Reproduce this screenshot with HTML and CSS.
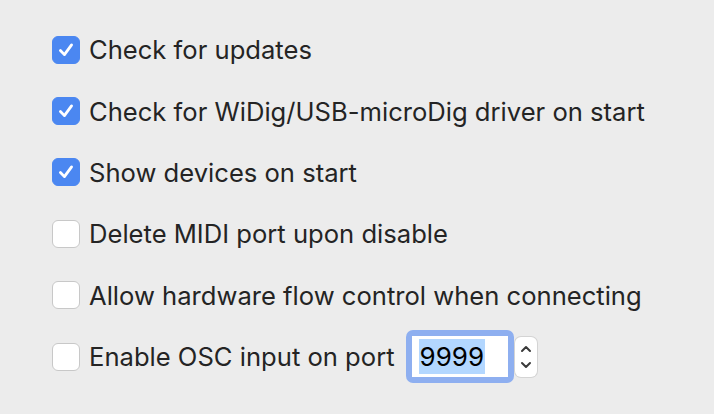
FILE: index.html
```html
<!DOCTYPE html>
<html>
<head>
    <title>Preferences</title>
    <link rel="stylesheet" href="styles.css">
</head>
<body>
    <div class="prefs">
        <label class="row">
            <span class="box checked"><svg viewBox="0 0 28 28"><path d="M8 14.5 L12.3 19 L20 8.5"/></svg></span>
            <span class="text">Check for updates</span>
        </label>
        <label class="row">
            <span class="box checked"><svg viewBox="0 0 28 28"><path d="M8 14.5 L12.3 19 L20 8.5"/></svg></span>
            <span class="text">Check for WiDig/USB-microDig driver on start</span>
        </label>
        <label class="row">
            <span class="box checked"><svg viewBox="0 0 28 28"><path d="M8 14.5 L12.3 19 L20 8.5"/></svg></span>
            <span class="text">Show devices on start</span>
        </label>
        <label class="row">
            <span class="box"></span>
            <span class="text">Delete MIDI port upon disable</span>
        </label>
        <label class="row">
            <span class="box"></span>
            <span class="text">Allow hardware flow control when connecting</span>
        </label>
        <div class="row">
            <span class="box"></span>
            <span class="text">Enable OSC input on port</span>
            <div class="port">
                <div class="field"><span class="sel">9999</span></div>
            </div>
            <div class="stepper">
                <svg viewBox="0 0 22 40"><path d="M7 14 L11 10 L15 14"/><path d="M7 26 L11 30 L15 26"/></svg>
            </div>
        </div>
    </div>
</body>
</html>
```

FILE: styles.css
```css
body {
    margin: 0;
    background-color: #ececec;
    font-family: "Inter", "Liberation Sans", sans-serif;
    color: #242424;
}
.prefs {
    padding: 19px 0 0 52px;
    display: flex;
    flex-direction: column;
}
.row {
    display: flex;
    align-items: center;
    height: 61.4px;
}
.box {
    width: 26px;
    height: 26px;
    border: 1px solid #c8c8c8;
    border-radius: 6px;
    background-color: #fff;
    flex-shrink: 0;
}
.box.checked {
    background-color: #4b87f1;
    border-color: #4b87f1;
}
.box svg {
    width: 26px;
    height: 26px;
    display: block;
}
.box svg path {
    fill: none;
    stroke: #fff;
    stroke-width: 3;
    stroke-linecap: round;
    stroke-linejoin: round;
}
.text {
    margin-left: 9px;
    font-size: 25.6px;
}
.port {
    margin-left: 11px;
    padding: 6px;
    background-color: #8eaff0;
    border-radius: 7px;
}
.field {
    width: 96px;
    height: 41px;
    background-color: #fff;
    display: flex;
    align-items: center;
    padding-left: 7px;
    box-sizing: border-box;
}
.sel {
    background-color: #b3d7ff;
    color: #000;
    font-size: 26px;
    line-height: 35px;
    padding: 0 1px;
}
.stepper {
    margin-left: 1px;
    width: 22px;
    height: 40px;
    background-color: #fff;
    border-radius: 6px;
    box-shadow: 0 0 0 1px #d4d4d4;
}
.stepper svg {
    width: 22px;
    height: 40px;
    display: block;
}
.stepper svg path {
    fill: none;
    stroke: #3a3a3a;
    stroke-width: 2;
    stroke-linecap: round;
    stroke-linejoin: round;
}
```
